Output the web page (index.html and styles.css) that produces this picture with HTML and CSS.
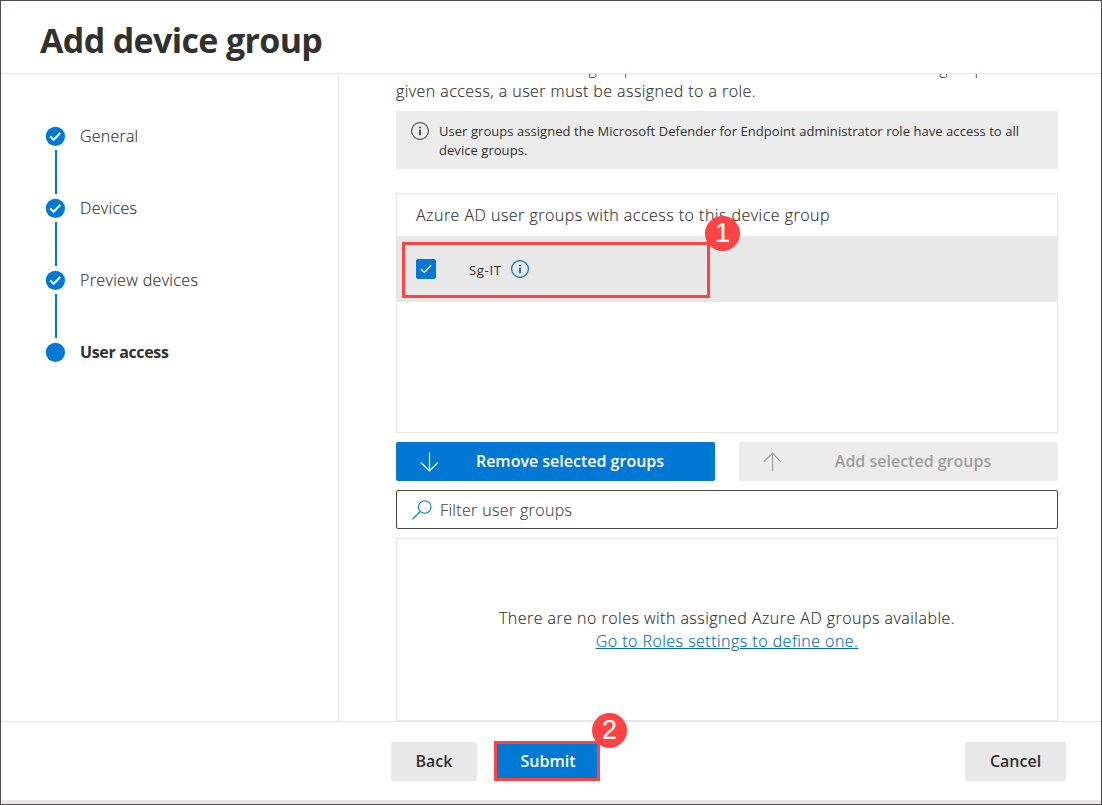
FILE: index.html
```html
<!DOCTYPE html>
<html lang="en">
<head>
<meta charset="utf-8">
<title>Add device group</title>
<link rel="stylesheet" href="styles.css">
</head>
<body>
<div class="dialog">
  <header class="header"><h1 class="title">Add device group</h1></header>
  <div class="body">
    <nav class="steps">
      <div class="step"><svg class="dot" viewBox="0 0 20 20"><circle cx="10.4" cy="10.4" r="9.6" fill="#0078d4"/><path d="M5.2 10.6 8.6 13.8 15.3 7" fill="none" stroke="#fff" stroke-width="2"/></svg><span class="step-general">General</span></div>
      <div class="link"></div>
      <div class="step"><svg class="dot" viewBox="0 0 20 20"><circle cx="10.4" cy="10.4" r="9.6" fill="#0078d4"/><path d="M5.2 10.6 8.6 13.8 15.3 7" fill="none" stroke="#fff" stroke-width="2"/></svg><span>Devices</span></div>
      <div class="link"></div>
      <div class="step"><svg class="dot" viewBox="0 0 20 20"><circle cx="10.4" cy="10.4" r="9.6" fill="#0078d4"/><path d="M5.2 10.6 8.6 13.8 15.3 7" fill="none" stroke="#fff" stroke-width="2"/></svg><span>Preview devices</span></div>
      <div class="link"></div>
      <div class="step current"><svg class="dot" viewBox="0 0 20 20"><circle cx="10.4" cy="10.4" r="9.6" fill="#0078d4"/></svg><span>User access</span></div>
    </nav>
    <main class="main">
      <p class="intro">Select the Azure AD user <span class="intro-wide">groups with access to devices in this device </span>group. To be<br><span class="intro-second">given access, a user must be assigned to a role.</span></p>
      <div class="notice">
        <svg class="info" viewBox="0 0 18 18"><circle cx="9" cy="9" r="8.4" fill="none" stroke="currentColor"/><path d="M9 4.7v1.6M9 7.5v5.8" stroke="currentColor" stroke-width="1.6"/></svg>
        <p class="notice-text">User groups assigned the Microsoft Defender for Endpoint administrator role have access to all<br>device groups.</p>
      </div>
      <section class="groups">
        <div class="groups-title">Azure AD user groups with access to this device group</div>
        <div class="group-row">
          <div class="checkbox"><svg viewBox="0 0 20 20"><path d="M5 10.2 8.3 13.4 15 6.5" fill="none" stroke="#fff" stroke-width="1.3"/></svg></div>
          <span class="group-name">Sg-IT</span>
          <svg class="info blue" viewBox="0 0 18 18"><circle cx="9" cy="9" r="8.4" fill="none" stroke="currentColor" stroke-width="1.2"/><path d="M9 4.7v1.6M9 7.5v5.8" stroke="currentColor" stroke-width="1.8"/></svg>
          <div class="callout callout-row"><b class="badge">1</b></div>
        </div>
      </section>
      <div class="actions">
        <button class="action primary"><svg class="arrow" viewBox="0 0 18 20"><path d="M9.5 .5V19M.8 10.5 9.5 19 18 10.5" fill="none" stroke="currentColor" stroke-width="1.2"/></svg><span class="action-label">Remove selected groups</span></button>
        <button class="action disabled"><svg class="arrow" viewBox="0 0 18 20"><path d="M9.5 19.5V1M.8 10 9.5 1 18 10" fill="none" stroke="currentColor" stroke-width="1.2"/></svg><span class="action-label">Add selected groups</span></button>
      </div>
      <div class="filter"><svg class="search" viewBox="0 0 20 20"><circle cx="12.7" cy="7" r="6.3" fill="none" stroke="#0078d4" stroke-width="1.1"/><path d="M.4 19.4 8.2 11.5" stroke="#0078d4" stroke-width="1.1"/></svg><span>Filter user groups</span></div>
      <section class="roles"><p>There are no roles with assigned Azure AD groups available.</p><a class="roles-link">Go to Roles settings to define one.</a></section>
    </main>
  </div>
  <footer class="footer">
    <button class="button back">Back</button>
    <button class="button submit">Submit<b class="badge">2</b></button>
    <button class="button cancel">Cancel</button>
  </footer>
</div>
</body>
</html>
```
FILE: styles.css
```css
* { box-sizing: border-box; }
body { margin: 0; background: #fff; color: #323130; font-family: "Open Sans", "Noto Sans", sans-serif; }
p, h1 { margin: 0; }
button { font-family: inherit; border: 0; padding: 0; }
.dialog { width: 1102px; height: 805px; border: 1px solid #504b4d; display: flex; flex-direction: column; overflow: hidden; background: #fff; }
.header { height: 73px; flex: none; border-bottom: 1px solid #e6e6e6; padding: 12px 0 0 39px; }
.title { font-size: 34px; line-height: 54px; font-weight: 700; letter-spacing: -.65px; }
.body { height: 647px; flex: none; display: flex; }
.steps { width: 338px; flex: none; border-right: 1px solid #e6e6e6; padding: 52px 0 0 44px; }
.step { height: 20px; display: flex; align-items: center; gap: 15px; font-size: 16px; font-weight: 300; line-height: 20px; letter-spacing: .35px; white-space: nowrap; }
.step, .intro-second, .groups-title, .filter, .roles { -webkit-text-stroke: .15px currentColor; }
.step-general { letter-spacing: .22px; }
.dot { width: 20px; height: 20px; flex: none; }
.link { width: 2px; height: 44px; margin: 4px 0 4px 10px; background: #0078d4; }
.step.current { font-weight: 700; letter-spacing: -.35px; -webkit-text-stroke: 0; }
.main { width: 719px; padding-left: 57px; overflow: hidden; display: flex; flex-direction: column; }
.intro { flex: none; height: 54px; margin-top: -17px; line-height: 23px; font-size: 16px; font-weight: 300; letter-spacing: .44px; white-space: nowrap; }
.intro-wide { word-spacing: 2.2px; }
.notice { height: 58px; flex: none; background: #ececec; padding: 11px 15px 0; display: flex; gap: 10px; }
.info { width: 18px; height: 18px; flex: none; }
.notice-text { font-size: 13px; line-height: 19px; letter-spacing: .05px; white-space: nowrap; }
.groups { height: 240px; flex: none; margin-top: 24px; border: 1px solid #e6e6e6; }
.groups-title { height: 42px; padding-left: 19px; line-height: 42px; font-size: 16px; font-weight: 300; letter-spacing: .48px; }
.group-row { height: 66px; background: #e8e8e8; display: flex; align-items: center; padding-left: 19px; position: relative; }
.checkbox { width: 20px; height: 20px; background: #0078d4; border-radius: 2px; display: flex; }
.group-name { margin-left: 33px; padding-top: 2px; font-size: 13px; letter-spacing: .7px; width: 42px; }
.blue { color: #006cbe; }
.callout-row { position: absolute; left: 5px; top: 6px; width: 308px; height: 56px; border: 3px solid #fd4344; }
.badge { position: absolute; width: 35px; height: 35px; border-radius: 50%; background: #fd4344; color: #fff; font: 400 27px/35px "Liberation Sans", sans-serif; text-align: center; -webkit-text-stroke: .2px #fff; }
.callout-row .badge { left: 300px; top: -29px; }
.actions { display: flex; gap: 24px; margin-top: 9px; flex: none; }
.action { width: 319px; height: 39px; border-radius: 2px; display: flex; align-items: center; padding-left: 24px; font-size: 16px; font-weight: 600; }
.arrow { width: 18px; height: 20px; flex: none; }
.action-label { flex: 1; text-align: center; padding: 0 13px 2px 0; }
.primary { background: #0078d4; color: #fff; }
.disabled { background: #ececec; color: #a19f9d; }
.filter { height: 39px; flex: none; margin-top: 9px; border: 1px solid #484644; border-radius: 2px; display: flex; align-items: center; gap: 8px; padding-left: 15px; font-size: 16px; font-weight: 300; letter-spacing: .34px; color: #484644; }
.search { width: 20px; height: 20px; }
.roles { height: 183px; flex: none; margin-top: 9px; border: 1px solid #e6e6e6; padding-top: 68px; display: flex; flex-direction: column; align-items: center; font-size: 16px; font-weight: 300; line-height: 23px; letter-spacing: .47px; }
.roles-link { color: #006cbe; text-decoration: underline; }
.footer { height: 83px; border-top: 1px solid #e6e6e6; display: flex; padding: 20px 35px 0 390px; border-bottom: 4px solid #e8e8e8; }
.button { height: 39px; border-radius: 2px; background: #e8e8e8; color: #323130; font-size: 16px; font-weight: 600; padding-bottom: 2px; }
.back { width: 86px; }
.submit { width: 106px; height: 40px; margin: -1px 0 0 17px; padding: 0 0 1px 2px; background: #0078d4; color: #fff; border: 3px solid #fd4344; border-radius: 0; position: relative; }
.submit .badge { left: 95px; top: -31px; }
.cancel { width: 101px; margin-left: auto; }
```
